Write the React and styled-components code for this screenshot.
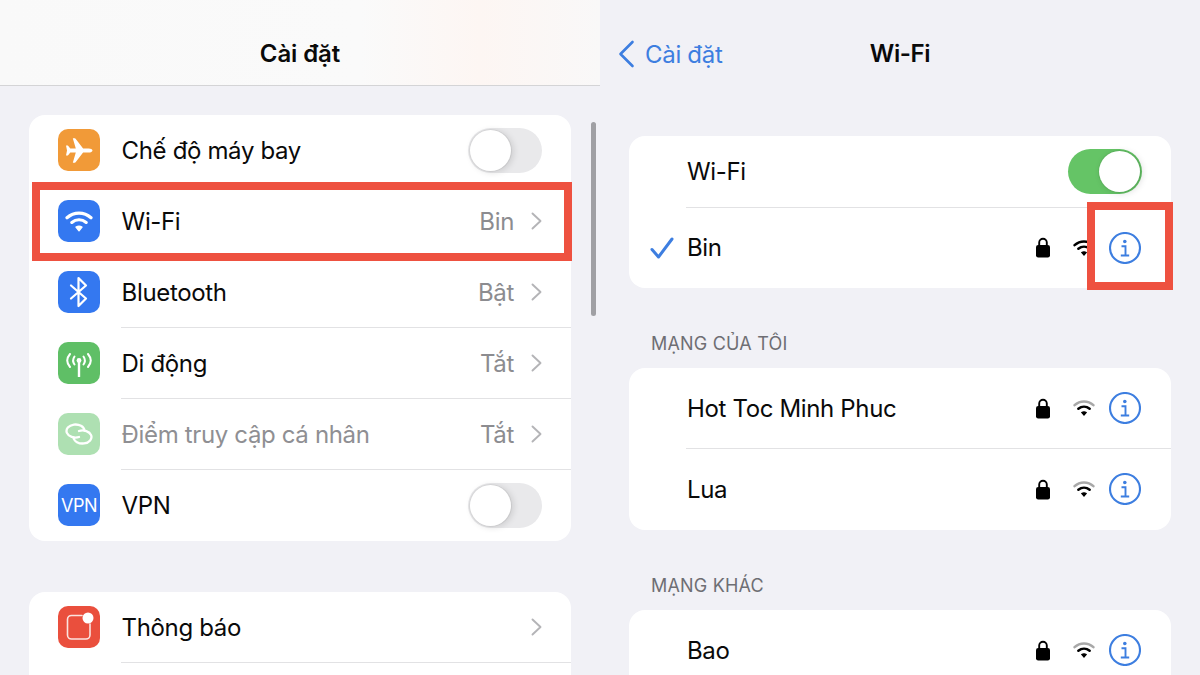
import styled, { createGlobalStyle } from "styled-components";
import { Fragment } from "react";

const GlobalStyle = createGlobalStyle`
  html, body { margin: 0; padding: 0; background: #f1f1f6; }
  body { font-family: "Inter", "Noto Sans", sans-serif; color: #0a0a0a; -webkit-font-smoothing: antialiased; }
`;

const Screen = styled.div`
  display: grid;
  grid-template-columns: 600px 600px;
  width: 1200px;
  height: 675px;
  overflow: hidden;
  background: #f1f1f6;
`;

const Panel = styled.section`
  position: relative;
  height: 675px;
  overflow: hidden;
`;

const Header = styled.header`
  box-sizing: border-box;
  height: 86px;
  padding-top: 34px;
  display: flex;
  justify-content: center;
  border-bottom: ${(p) => (p.$plain ? "1px solid transparent" : "1px solid #d4d4d6")};
  background: ${(p) =>
    p.$plain
      ? "transparent"
      : "linear-gradient(90deg, #f9f9f9 0%, #fafafa 60%, #fdf6f3 80%, #f9f8f8 100%)"};
`;

const Title = styled.h1`
  margin: 0;
  font-size: 24px;
  line-height: 40px;
  font-weight: 600;
  letter-spacing: ${(p) => p.$ls || 0}px;
`;

const Back = styled.a`
  position: absolute;
  left: 18px;
  top: 34px;
  display: flex;
  align-items: center;
  gap: 10px;
  height: 40px;
  color: #3d7ee0;
  font-size: 24px;
  letter-spacing: -0.3px;
  svg { display: block; }
`;

const Body = styled.div`
  padding: ${(p) => p.$top}px 29px 0;
  display: flex;
  flex-direction: column;
`;

const Card = styled.div`
  background: #fff;
  border-radius: 16px;
  margin-bottom: ${(p) => p.$gap || 0}px;
`;

const Label = styled.div`
  padding-left: 22px;
  height: 25px;
  line-height: 25px;
  margin-bottom: 12px;
  font-size: 18px;
  color: #6e6e73;
  letter-spacing: 0.2px;
`;

const Row = styled.div`
  position: relative;
  display: flex;
  align-items: stretch;
  height: ${(p) => p.$h || 71}px;
`;

const Lead = styled.div`
  flex: none;
  width: ${(p) => p.$w}px;
  display: flex;
  align-items: center;
  box-sizing: border-box;
  padding: ${(p) => (p.$icon ? "0 0 1px 29px" : "0 0 0 21px")};
`;

const Content = styled.div`
  flex: 1;
  min-width: 0;
  display: flex;
  align-items: center;
  box-sizing: border-box;
  padding: 0 ${(p) => p.$pr || 29}px 0 ${(p) => p.$pl || 0}px;
  border-bottom: 1px solid ${(p) => (p.$divider ? "#e2e2e4" : "transparent")};
`;

const Name = styled.span`
  flex: 1;
  font-size: 24px;
  letter-spacing: -0.35px;
  color: ${(p) => (p.$dim ? "#8f8f93" : "#0a0a0a")};
`;

const Value = styled.span`
  font-size: 24px;
  letter-spacing: -0.35px;
  color: #8c8c90;
  margin-right: 17px;
`;

const IconBox = styled.div`
  width: 42px;
  height: 42px;
  border-radius: 10px;
  background: ${(p) => p.$bg};
  display: flex;
  align-items: center;
  justify-content: center;
  color: #fff;
  font-size: 18px;
  letter-spacing: -0.5px;
  svg { display: block; }
`;

const Toggle = styled.div`
  width: 74px;
  height: 45px;
  box-sizing: border-box;
  padding: 2px;
  border-radius: 23px;
  display: flex;
  justify-content: ${(p) => (p.$on ? "flex-end" : "flex-start")};
  background: ${(p) => (p.$on ? "#65c466" : "#e9e9eb")};
`;

const Knob = styled.div`
  width: 41px;
  height: 41px;
  border-radius: 50%;
  background: #fff;
  box-shadow: 2px 1px 7px rgba(0, 0, 0, 0.14), 0 0 0 1px rgba(0, 0, 0, 0.05);
`;

const Highlight = styled.div`
  position: absolute;
  box-sizing: border-box;
  border: 8px solid #ee5140;
  top: ${(p) => p.$top}px;
  bottom: ${(p) => p.$bottom}px;
  right: ${(p) => p.$right}px;
  left: ${(p) => p.$left}px;
  pointer-events: none;
`;

const Scrollbar = styled.div`
  position: absolute;
  left: 591px;
  top: 122px;
  width: 5px;
  height: 194px;
  border-radius: 3px;
  background: #a0a0a4;
`;

const Status = styled.div`
  display: flex;
  align-items: center;
  gap: 23px;
  margin-right: 14px;
  svg { display: block; }
`;

const Chevron = () => (
  <svg width="11" height="18" viewBox="0 0 11 18" fill="none" stroke="#b4b4b7" strokeWidth="1.9" strokeLinecap="round" strokeLinejoin="round">
    <path d="M1.5 1.5 9.5 9l-8 7.5" />
  </svg>
);

const BackChevron = () => (
  <svg width="17" height="28" viewBox="0 0 17 28" fill="none" stroke="#3d7ee0" strokeWidth="2.6" strokeLinecap="round" strokeLinejoin="round">
    <path d="M14.5 2 2.5 14l12 12" />
  </svg>
);

const PlaneIcon = () => (
  <svg width="28" height="25" viewBox="0 0 28 25" fill="#fff">
    <path d="M27.5 12.5c0-1.3-1.8-2.1-3.8-2.1h-5.6L10.6.8C10.4.5 10.1.3 9.8.3h-2l3 10.1H5.3L2.9 7.6H1l1 4.9-1 4.9h1.9l2.4-2.8h5.5l-3 10.1h2c.3 0 .6-.2.8-.5l7.5-9.6h5.6c2 0 3.8-.8 3.8-2.1z" />
  </svg>
);

const WifiGlyph = ({ size = 28, color = "#fff", outer }) => (
  <svg width={size} height={size * 0.8} viewBox="0 0 28 22" fill="none" stroke={color} strokeWidth="3.2" strokeLinecap="round">
    <path d="M2 7.6C9 1.4 19 1.4 26 7.6" stroke={outer || color} />
    <path d="M6.8 12.2c4.3-3.5 10.1-3.5 14.4 0" />
    <path d="M14 20.5l-3-3.6c1.8-1 4.2-1 6 0z" fill={color} strokeWidth="1.4" strokeLinejoin="round" />
  </svg>
);

const BluetoothIcon = () => (
  <svg width="22" height="34" viewBox="0 0 22 34" fill="none" stroke="#fff" strokeWidth="2.2" strokeLinecap="round" strokeLinejoin="round">
    <path d="M3 10.5 18 23.5 10.5 31V3L18 10.5 3 23.5" />
  </svg>
);

const AntennaIcon = () => (
  <svg width="28" height="28" viewBox="0 0 28 28" fill="none" stroke="#fff" strokeWidth="2" strokeLinecap="round">
    <circle cx="14" cy="11.5" r="2.4" fill="#fff" stroke="none" />
    <path d="M14 12v15.5" strokeWidth="2.4" />
    <path d="M9.5 7.5c-1.800 2.600-1.800 5.400 0 8M18.500 7.500c1.800 2.600 1.800 5.400 0 8" />
    <path d="M5 5c-3.500 4.200-3.500 9 0 13M23 5c3.500 4.200 3.500 9 0 13" />
  </svg>
);

const HotspotIcon = () => (
  <svg width="28" height="24" viewBox="0 0 28 24" fill="none" stroke="#fff" strokeWidth="2.3" strokeLinecap="round">
    <path d="M14 15A9 6.5 0 1 1 19.5 8.5" />
    <path d="M14 9A9 6.5 0 1 1 8.5 15.5" />
  </svg>
);

const BellIcon = () => (
  <svg width="42" height="42" viewBox="0 0 42 42" fill="none">
    <path d="M24 9.5H13.5c-2.2 0-4 1.800-4 4V29c0 2.200 1.800 4 4 4H28c2.200 0 4-1.800 4-4V18" stroke="#fbe3df" strokeWidth="1.6" strokeLinecap="round" />
    <circle cx="30" cy="12" r="5.5" fill="#fff" />
  </svg>
);

const LockIcon = () => (
  <svg width="14" height="21" viewBox="0 0 14 21">
    <path d="M3.2 9V5.5a3.800 3.800 0 0 1 7.600 0V9" fill="none" stroke="#000" strokeWidth="1.9" />
    <rect x="0" y="8" width="14" height="12.5" rx="2.2" fill="#000" />
  </svg>
);

const CheckIcon = () => (
  <svg width="24" height="22" viewBox="0 0 24 22" fill="none" stroke="#3d7ee0" strokeWidth="3" strokeLinecap="round" strokeLinejoin="round">
    <path d="M2 12.5 8.5 20 22 2" />
  </svg>
);

const InfoIcon = () => (
  <svg width="32" height="32" viewBox="0 0 32 32" fill="none" stroke="#3d7ee0" strokeWidth="2.1">
    <circle cx="16" cy="16" r="15" />
    <circle cx="15.8" cy="9.5" r="1.8" fill="#3d7ee0" stroke="none" />
    <path d="M12.5 14.2h4v9M11.8 23.5h8.4" strokeWidth="1.9" />
  </svg>
);

const settingsTop = [
  { name: "Chế độ máy bay", bg: "#f19a38", icon: <PlaneIcon />, toggle: true },
  { name: "Wi-Fi", bg: "#3478f0", icon: <WifiGlyph />, value: "Bin", marked: true },
  { name: "Bluetooth", bg: "#3478f0", icon: <BluetoothIcon />, value: "Bật", divider: true },
  { name: "Di động", bg: "#5fbf66", icon: <AntennaIcon />, value: "Tắt", divider: true },
  { name: "Điểm truy cập cá nhân", bg: "#aee0b2", icon: <HotspotIcon />, value: "Tắt", divider: true, dim: true },
  { name: "VPN", bg: "#3478f0", icon: "VPN", toggle: true },
];

function SettingRow({ item }) {
  return (
    <Row>
      <Lead $icon $w={92}>
        <IconBox $bg={item.bg}>{item.icon}</IconBox>
      </Lead>
      <Content $divider={item.divider} $pl={0.6}>
        <Name $dim={item.dim}>{item.name}</Name>
        {item.value && <Value>{item.value}</Value>}
        {item.toggle ? <Toggle><Knob /></Toggle> : <Chevron />}
      </Content>
      {item.marked && <Highlight $top={-4} $bottom={-4} $left={3} $right={-1} />}
    </Row>
  );
}

function Network({ name, h, divider, current }) {
  return (
    <Row $h={h}>
      <Lead $w={57}>{current && <CheckIcon />}</Lead>
      <Content $divider={divider} $pl={1} $pr={30}>
        <Name>{name}</Name>
        <Status>
          <LockIcon />
          <WifiGlyph size={22} color="#000" outer={current ? "#000" : "#a8a8a8"} />
        </Status>
        <InfoIcon />
      </Content>
      {current && <Highlight $top={-6} $bottom={-2} $right={-2} $left={458} />}
    </Row>
  );
}

export default function App() {
  return (
    <Fragment>
      <GlobalStyle />
      <Screen>
        <Panel>
          <Header>
            <Title $ls={-0.1}>Cài đặt</Title>
          </Header>
          <Body $top={29}>
            <Card $gap={51}>
              {settingsTop.map((item) => (
                <SettingRow key={item.name} item={item} />
              ))}
            </Card>
            <Card>
              <SettingRow item={{ name: "Thông báo", bg: "#ea4f3d", icon: <BellIcon />, divider: true }} />
              <Row />
            </Card>
          </Body>
          <Scrollbar />
        </Panel>
        <Panel>
          <Header $plain>
            <Back>
              <BackChevron />
              Cài đặt
            </Back>
            <Title $ls={-0.4}>Wi-Fi</Title>
          </Header>
          <Body $top={50}>
            <Card $gap={43}>
              <Row $h={72}>
                <Lead $w={57} />
                <Content $divider $pl={1} $pr={29}>
                  <Name>Wi-Fi</Name>
                  <Toggle $on><Knob /></Toggle>
                </Content>
              </Row>
              <Network name="Bin" h={80} current />
            </Card>
            <Label>MẠNG CỦA TÔI</Label>
            <Card $gap={43}>
              <Network name="Hot Toc Minh Phuc" h={81} divider />
              <Network name="Lua" h={81} />
            </Card>
            <Label>MẠNG KHÁC</Label>
            <Card>
              <Network name="Bao" h={81} divider />
            </Card>
          </Body>
        </Panel>
      </Screen>
    </Fragment>
  );
}
